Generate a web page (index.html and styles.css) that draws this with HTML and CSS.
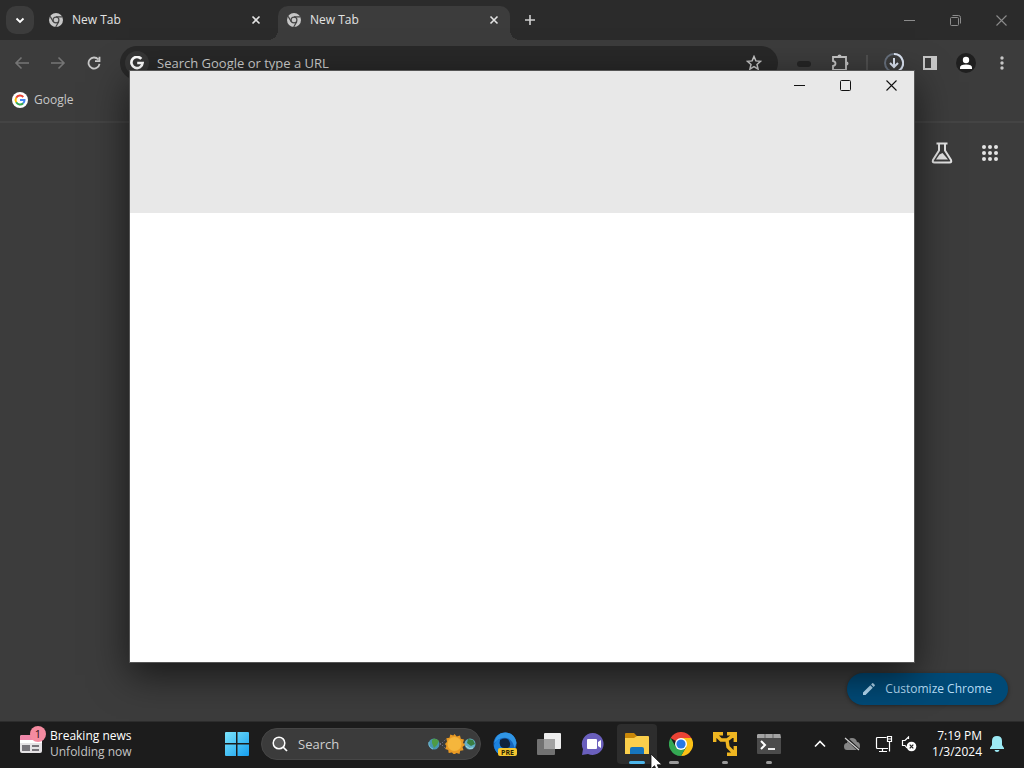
FILE: index.html
```
<!DOCTYPE html>
<html lang="en">

<head>
  <meta charset="UTF-8" />
  <title>New Tab</title>
  <meta name="viewport" content="width=device-width, initial-scale=1.0" />
  <link rel="stylesheet" href="styles.css">
</head>

<body>

  <!-- shared shapes -->
  <svg class="defs" aria-hidden="true">
    <symbol id="chrome-mono" viewBox="0 0 24 24">
      <circle cx="12" cy="12" r="12" fill="#c7c7c7" />
      <path d="M12 6.5h11M7.2 14.8L2 5.8M16.8 14.8L11.5 24" stroke="#444" stroke-width="2" />
      <circle cx="12" cy="12" r="6" fill="#444" />
      <circle cx="12" cy="12" r="4" fill="#c7c7c7" />
    </symbol>
    <symbol id="close" viewBox="0 0 10 10">
      <path d="M1.5 1.5l7 7M8.5 1.5l-7 7" stroke="currentColor" stroke-width="1.6" />
    </symbol>
    <symbol id="win-close" viewBox="0 0 11 11">
      <path d="M.5.5l10 10M10.5.5l-10 10" stroke="currentColor" stroke-width="1.1" />
    </symbol>
    <symbol id="win-min" viewBox="0 0 11 11">
      <path d="M0 5.5h11" stroke="currentColor" />
    </symbol>
  </svg>

  <div class="browser">
    <div class="tab-strip">
      <button class="tab-search" aria-label="Search tabs">
        <svg width="10" height="10" viewBox="0 0 10 10"><path d="M1.5 3.5L5 7l3.5-3.5" fill="none" stroke="#fff" stroke-width="1.8" /></svg>
      </button>
      <div class="tab">
        <svg width="14" height="14"><use href="#chrome-mono" /></svg>
        <span>New Tab</span>
        <button aria-label="Close tab"><svg width="10" height="10"><use href="#close" /></svg></button>
      </div>
      <div class="tab active">
        <svg width="14" height="14"><use href="#chrome-mono" /></svg>
        <span>New Tab</span>
        <button aria-label="Close tab"><svg width="10" height="10"><use href="#close" /></svg></button>
      </div>
      <button class="new-tab" aria-label="New tab">
        <svg width="12" height="12" viewBox="0 0 12 12"><path d="M6 1v10M1 6h10" stroke="#d0d0d0" stroke-width="1.6" /></svg>
      </button>
      <div class="win-controls">
        <button aria-label="Minimize"><svg width="11" height="11"><use href="#win-min" /></svg></button>
        <button aria-label="Restore">
          <svg width="11" height="11" viewBox="0 0 11 11"><rect x=".5" y="2.5" width="8" height="8" rx="1" fill="none" stroke="currentColor" /><path d="M2.5.5h6q2 0 2 2v6" fill="none" stroke="currentColor" /></svg>
        </button>
        <button aria-label="Close"><svg width="11" height="11"><use href="#win-close" /></svg></button>
      </div>
    </div>

    <div class="toolbar">
      <button class="dim" aria-label="Back">
        <svg width="16" height="14" viewBox="0 0 16 14"><path d="M15 7H2M7.5 1.5L2 7l5.500 5.500" fill="none" stroke="currentColor" stroke-width="1.6" /></svg>
      </button>
      <button class="dim" aria-label="Forward">
        <svg width="16" height="14" viewBox="0 0 16 14"><path d="M1 7h13M8.5 1.5L14 7l-5.500 5.500" fill="none" stroke="currentColor" stroke-width="1.6" /></svg>
      </button>
      <button aria-label="Reload">
        <svg width="14" height="14" viewBox="0 0 14 14"><path d="M11.3 3.5A5.500 5.500 0 1 0 12.5 7.8M12.5.8v4.400H8" fill="none" stroke="currentColor" stroke-width="1.8" /></svg>
      </button>
      <div class="omnibox">
        <span class="g-chip">
          <svg width="14" height="14" viewBox="0 0 14 14"><path d="M11.3 2.9A5.600 5.600 0 1 0 12.6 7H7.2" fill="none" stroke="#fff" stroke-width="2.6" /></svg>
        </span>
        <input type="text" aria-label="Address and search bar" placeholder="Search Google or type a URL" />
        <button aria-label="Bookmark this tab">
          <svg width="16" height="16" viewBox="0 0 16 16"><path d="M8 1.5l1.9 4.4 4.7.4-3.6 3.1 1.1 4.7L8 11.6l-4.100 2.5L5 9.400 1.400 6.3l4.700-.4z" fill="none" stroke="currentColor" stroke-width="1.5" /></svg>
        </button>
      </div>
      <button aria-label="Extension">
        <svg width="16" height="16" viewBox="0 0 16 16"><rect x="1" y="6" width="14" height="6" rx="3" fill="#252525" /></svg>
      </button>
      <button aria-label="Extensions">
        <svg width="18" height="18" viewBox="0 0 18 18"><path d="M2 3h13v13H2v-4q2.500-.5 2.500-2.500T2 7z" fill="none" stroke="currentColor" stroke-width="1.8" /><path d="M6.500 2.500a2 2 0 0 1 4 0zM15.500 7.500a2 2 0 0 1 0 4z" fill="currentColor" /></svg>
      </button>
      <span class="divider"></span>
      <button aria-label="Downloads">
        <svg width="20" height="20" viewBox="0 0 20 20"><circle cx="10" cy="10" r="9" fill="none" stroke="#68717e" stroke-width="2" /><path d="M10 1a9 9 0 0 1 5 16.5" fill="none" stroke="#dce4f2" stroke-width="2" /><path d="M10 5v9M6 10l4 4 4-4" fill="none" stroke="#dce4f2" stroke-width="2" /></svg>
      </button>
      <button aria-label="Side panel">
        <svg width="14" height="14" viewBox="0 0 14 14"><path d="M1 1h12v12H1z" fill="none" stroke="currentColor" stroke-width="2" /><path d="M8 1h5v12H8z" fill="currentColor" /></svg>
      </button>
      <button aria-label="Profile">
        <svg width="20" height="20" viewBox="0 0 20 20"><circle cx="10" cy="10" r="10" fill="#1f1f1f" /><circle cx="10" cy="7" r="3.2" fill="#fff" /><path d="M4 16v-1.5q0-3 6-3t6 3V16z" fill="#fff" /></svg>
      </button>
      <button aria-label="Menu">
        <svg width="4" height="14" viewBox="0 0 4 14" fill="currentColor"><circle cx="2" cy="2" r="1.7" /><circle cx="2" cy="7" r="1.7" /><circle cx="2" cy="12" r="1.7" /></svg>
      </button>
    </div>

    <div class="bookmarks">
      <a href="#">
        <svg width="16" height="16" viewBox="0 0 16 16">
          <circle cx="8" cy="8" r="8" fill="#fff" />
          <g fill="none" stroke-width="2">
            <path d="M4.2 5.7A4.500 4.500 0 0 1 11.3 5" stroke="#ea4335" />
            <path d="M4.2 10.3a4.500 4.500 0 0 1 0-4.6" stroke="#fbbc05" />
            <path d="M11.2 11.2a4.500 4.500 0 0 1-7-.9" stroke="#34a853" />
            <path d="M8 8h4.500q0 2-1.300 3.2" stroke="#4285f4" />
          </g>
        </svg>
        <span>Google</span>
      </a>
    </div>

    <div class="new-tab-page">
      <div class="shortcuts">
        <button aria-label="Search Labs">
          <svg width="22" height="22" viewBox="0 0 22 22"><path d="M5.500 1.500h11M8 2v6.500L2 18q-1 2.500 1.500 2.500h15Q21 20.500 20 18l-6-9.500V2" fill="none" stroke="currentColor" stroke-width="2" /><path d="M5 17.500l3.500-5 3-1.500 5.500 6.500z" fill="currentColor" /></svg>
        </button>
        <button aria-label="Google apps">
          <svg width="16" height="16" viewBox="0 0 16 16" fill="currentColor"><circle cx="2" cy="2" r="2" /><circle cx="8" cy="2" r="2" /><circle cx="14" cy="2" r="2" /><circle cx="2" cy="8" r="2" /><circle cx="8" cy="8" r="2" /><circle cx="14" cy="8" r="2" /><circle cx="2" cy="14" r="2" /><circle cx="8" cy="14" r="2" /><circle cx="14" cy="14" r="2" /></svg>
        </button>
      </div>
      <button class="customize">
        <svg width="12" height="12" viewBox="0 0 12 12" fill="currentColor"><path d="M0 9.500L7.300 2.200l2.500 2.500L2.500 12H0zM8.100 1.400L9.200.3q.5-.5 1 0l1.500 1.500q.5.5 0 1l-1.100 1.100z" /></svg>
        <span>Customize Chrome</span>
      </button>
    </div>

    <!-- window that is still loading -->
    <div class="window">
      <div class="window-head">
        <div class="win-controls">
          <button aria-label="Minimize"><svg width="11" height="11"><use href="#win-min" /></svg></button>
          <button aria-label="Maximize">
            <svg width="11" height="11" viewBox="0 0 11 11"><rect x=".5" y=".5" width="10" height="10" rx="1" fill="none" stroke="currentColor" /></svg>
          </button>
          <button aria-label="Close"><svg width="11" height="11"><use href="#win-close" /></svg></button>
        </div>
      </div>
    </div>
  </div>

  <div class="taskbar">
    <button class="news">
      <span class="news-icon">
        <svg width="22" height="18" viewBox="0 0 22 18"><rect width="22" height="18" rx="2" fill="#e5e3e5" /><path d="M2 0h18q2 0 2 2v3H0V2q0-2 2-2z" fill="#ee86a8" /><path d="M0 5h22v3H0z" fill="#fff" /><path d="M2 10h8v6H2zM12 10h7v2h-7zM12 14h7v2h-7z" fill="#77747a" /></svg>
        <span class="badge">1</span>
      </span>
      <span class="news-text">
        <span>Breaking news</span>
        <span class="sub">Unfolding now</span>
      </span>
    </button>

    <div class="apps">
      <button class="app" aria-label="Start">
        <svg width="24" height="24" viewBox="0 0 24 24">
          <defs><linearGradient id="start" x2="1" y2="1"><stop stop-color="#7be4fb" /><stop offset="1" stop-color="#159ef0" /></linearGradient></defs>
          <path d="M1 0h10v11H0V1q0-1 1-1zM12.500 0H23q1 0 1 1v10H12.500zM0 12.500h11V24H1q-1 0-1-1zM12.500 12.500H24V23q0 1-1 1H12.500z" fill="url(#start)" />
        </svg>
      </button>
      <div class="search">
        <svg width="16" height="16" viewBox="0 0 16 16"><circle cx="7" cy="7" r="5.8" fill="#5b5b5b" stroke="#fff" stroke-width="1.5" /><path d="M11 11l4 4" stroke="#fff" stroke-width="1.7" /></svg>
        <input type="text" aria-label="Search" placeholder="Search" />
        <svg width="48" height="20" viewBox="0 0 48 20">
          <path d="M8 5l10 10M8 15L18 5M32 6l8 8M32 14l8-8" stroke="#8a8aa5" stroke-dasharray="1 2" />
          <circle cx="6" cy="10" r="5.500" fill="#4795b0" /><path d="M4 6q3-3 7 1l-2 4-3 3-2-5z" fill="#4e9b45" /><path d="M1 8q-1 5 4 7" fill="none" stroke="#79bed8" />
          <circle cx="42" cy="10" r="5.500" fill="#63afc5" /><path d="M40 5l5 1 2 4-4 2-4-3z" fill="#397e43" /><path d="M38 12q3 4 7 2" fill="none" stroke="#b0dce5" />
          <path d="M26.500 0l2.300 2.500 3.200-1 .8 3.200 3.200.8-1 3.200 2 2.300-2.500 2 1 3.200-3.300.5-.7 3.200-3-1-2.500 1.800-2-2.300-3.300.7-.5-3.200-3-1 1.200-3L17 10l2-2.300-.7-3.400 3.200-.5.8-3.200 3 1z" fill="#e99a24" /><circle cx="26.500" cy="10" r="7" fill="#f5b63c" />
        </svg>
      </div>
      <button class="app" aria-label="Edge Canary">
        <svg width="26" height="26" viewBox="0 0 26 26">
          <circle cx="13" cy="13" r="11.500" fill="#1565bd" /><path d="M2 12Q4 1 14 1.500q9 1 10.500 10.500l-2 5q-2-9-8-10T2 12z" fill="#3096e6" /><path d="M8 9q8-4 10 3 1 6-6 5T8 9z" fill="#10233d" /><path d="M2 15q2-7 6-7-2 8 5 11l-4 5q-6-2-7-9z" fill="#1c82dd" />
          <rect x="6" y="17" width="19" height="8" rx="2" fill="#f4c630" /><text class="pre" x="15.500" y="23.500" text-anchor="middle">PRE</text>
        </svg>
      </button>
      <button class="app" aria-label="Task view">
        <svg width="24" height="24" viewBox="0 0 24 24"><rect x="7" y="1" width="17" height="16" rx="1" fill="#ededed" /><rect y="7" width="18" height="16" rx="1" fill="#727272" /><path d="M7 7h11v10H7z" fill="#a2a2a2" /></svg>
      </button>
      <button class="app" aria-label="Chat">
        <svg width="24" height="24" viewBox="0 0 24 24"><path d="M12 1a11 11 0 1 1-5 21L1 23l1-6A11 11 0 0 1 12 1z" fill="#6a5fbd" /><rect x="6" y="7" width="10" height="10" rx="1" fill="#fff" /><path d="M17 10l3-2v8l-3-2z" fill="#fff" /></svg>
      </button>
      <button class="app current" aria-label="File Explorer">
        <svg width="24" height="24" viewBox="0 0 24 24"><path d="M1 1h8l3 3h11v6H0V2q0-1 1-1z" fill="#c98708" /><path d="M0 6h9l3-2h11q1 0 1 1v17H0z" fill="#fbcf4b" /><path d="M5 22v-5q0-2 2-2h10q2 0 2 2v5z" fill="#1675bd" /></svg>
      </button>
      <button class="app running wide" aria-label="Google Chrome">
        <svg width="24" height="24" viewBox="0 0 24 24"><path d="M12 12L1.600 6A12 12 0 0 1 22.400 6z" fill="#ea4335" /><path d="M12 6h10.400A12 12 0 0 1 12 24l5.200-9z" fill="#fbc116" /><path d="M1.600 6L6.800 15l5.200 3 5.200-3L12 24A12 12 0 0 1 1.600 6z" fill="#34a853" /><circle cx="12" cy="12" r="6" fill="#fff" /><circle cx="12" cy="12" r="4.600" fill="#2878e4" /></svg>
      </button>
      <button class="app running" aria-label="Network tool">
        <svg width="24" height="24" viewBox="0 0 24 24" fill="none" stroke="#efb621" stroke-width="3.400"><path d="M1.700 10V1.700H10M14 1.700h8.300V10M22.300 14v8.300H14M2 2l6 6h6l8-6M14 8l1 7 7 7" /></svg>
      </button>
      <button class="app running" aria-label="Terminal">
        <svg width="24" height="20" viewBox="0 0 24 20"><rect width="24" height="20" rx="1" fill="#4b4b4b" /><path d="M1 0h22l1 4H0V1z" fill="#a4a4a4" /><path d="M8 0v4M16 0v4" stroke="#666" /><path d="M4 7l4 4-4 4" fill="none" stroke="#fff" stroke-width="2" /><path d="M11 15h7" stroke="#fff" stroke-width="1.8" /></svg>
      </button>
    </div>

    <div class="tray">
      <button aria-label="Show hidden icons">
        <svg width="12" height="8" viewBox="0 0 12 8"><path d="M1 6.500l5-5 5 5" fill="none" stroke="#fff" stroke-width="1.6" /></svg>
      </button>
      <button aria-label="OneDrive">
        <svg width="18" height="14" viewBox="0 0 18 14"><path d="M4 13q-3 0-3-3.500t3-3.500q1-5 5-5t5 4q3 0 3 4t-3 4z" fill="#858585" /><path d="M3 1l13 12" stroke="#1c1c1c" stroke-width="3" /><path d="M2 1l14 12" stroke="#d4d4d4" stroke-width="1.2" /></svg>
      </button>
      <button class="network" aria-label="Network">
        <svg width="18" height="18" viewBox="0 0 18 18" fill="none" stroke="#fff" stroke-width="1.2"><path d="M11.500 2.500h-9q-1 0-1 1v9q0 1 1 1H13M7.500 13.500v3M4 16.500h8M12.500 1.500h4v5h-4zM12.500 4h4M14.500 6.500v10" /></svg>
      </button>
      <button class="sound" aria-label="Volume">
        <svg width="16" height="16" viewBox="0 0 16 16"><path d="M7.500 3V1L4 4.500H1.500v5H4L6 12" fill="none" stroke="#fff" stroke-width="1.2" /><circle cx="10.500" cy="10.500" r="4.800" fill="#fff" /><path d="M8.700 8.700l3.600 3.600M12.300 8.700l-3.600 3.600" stroke="#222" stroke-width="1.2" /></svg>
      </button>
      <button class="clock"><span>7:19 PM</span><span>1/3/2024</span></button>
      <button aria-label="Notifications">
        <svg width="14" height="16" viewBox="0 0 14 16" fill="#9deaf5"><path d="M7 0q5 0 5 5v4l2 3v1H0v-1l2-3V5q0-5 5-5zM4.500 14h5q-.5 2-2.500 2t-2.500-2z" /></svg>
      </button>
    </div>
  </div>

  <svg class="cursor" width="13" height="20" viewBox="0 0 13 20"><path d="M1 1v15l3.500-3.300L7 18.500l2.700-1.200-2.500-5.500H12z" fill="#fff" stroke="#111" stroke-width=".8" /></svg>

</body>

</html>
```

FILE: styles.css
```
* {
  margin: 0;
  padding: 0;
  box-sizing: border-box;
  font-family: "Open Sans", "Noto Sans", sans-serif;
}

body {
  height: 100vh;
  display: flex;
  flex-direction: column;
  overflow: hidden;
  background: #1c1c1c;
  color: #e3e3e3;
  font-size: 12px;
  line-height: 16px;
}

button {
  display: flex;
  align-items: center;
  justify-content: center;
  border: none;
  background: none;
  color: inherit;
  font-size: inherit;
  line-height: inherit;
}

input {
  flex: 1;
  min-width: 0;
  border: none;
  outline: none;
  background: none;
  color: inherit;
}

svg {
  flex: none;
  display: block;
}

.defs {
  position: absolute;
  width: 0;
  height: 0;
}

/* browser */

.browser {
  flex: 1;
  position: relative;
  display: flex;
  flex-direction: column;
  overflow: hidden;
  background: #3c3c3c;
}

.tab-strip {
  height: 40px;
  display: flex;
  align-items: center;
  padding-left: 6px;
  background: #2b2b2b;
}

.tab-search {
  width: 28px;
  height: 28px;
  border-radius: 10px;
  background: #3c3c3c;
}

.tab {
  flex: 0 1 232px;
  height: 28px;
  display: flex;
  align-items: center;
  gap: 9px;
  margin-left: 6px;
  padding: 0 8px 0 9px;
}

.tab span {
  flex: 1;
}

.tab button {
  width: 16px;
  height: 16px;
}

.tab.active {
  position: relative;
  align-self: flex-end;
  height: 34px;
  padding-bottom: 6px;
  border-radius: 10px 10px 0 0;
  background: #3c3c3c;
}

.tab.active::before,
.tab.active::after {
  content: "";
  position: absolute;
  bottom: 0;
  width: 10px;
  height: 10px;
}

.tab.active::before {
  right: 100%;
  background: radial-gradient(circle at 0 0, transparent 10px, #3c3c3c 10px);
}

.tab.active::after {
  left: 100%;
  background: radial-gradient(circle at 100% 0, transparent 10px, #3c3c3c 10px);
}

.new-tab {
  width: 28px;
  height: 28px;
  margin-left: 6px;
}

.win-controls {
  display: flex;
  margin-left: auto;
}

.win-controls button {
  width: 46px;
  height: 28px;
}

.tab-strip .win-controls {
  color: #8c8c8c;
}

.toolbar {
  height: 46px;
  display: flex;
  align-items: center;
  padding: 0 4px;
  color: #c7c7c7;
}

.toolbar > button {
  width: 36px;
  height: 34px;
}

.toolbar .dim {
  color: #757575;
}

.omnibox {
  flex: 1;
  height: 34px;
  display: flex;
  align-items: center;
  gap: 8px;
  margin: 0 8px;
  padding: 0 16px 0 5px;
  border-radius: 17px;
  background: #282828;
}

.omnibox input {
  font-size: 13px;
}

.omnibox input::placeholder {
  color: #d0d0d0;
}

.g-chip {
  width: 24px;
  height: 24px;
  display: flex;
  align-items: center;
  justify-content: center;
  border-radius: 50%;
  background: #363636;
}

.divider {
  width: 2px;
  height: 16px;
  margin: 0 8px;
  background: #505050;
}

.bookmarks {
  height: 37px;
  padding: 6px 12px;
  border-bottom: 2px solid #444;
  color: #c7c7c7;
}

.bookmarks a {
  display: inline-flex;
  align-items: center;
  gap: 6px;
  color: inherit;
  text-decoration: none;
}

.new-tab-page {
  flex: 1;
  display: flex;
  flex-direction: column;
  align-items: flex-end;
  justify-content: space-between;
  padding: 12px 16px 16px;
}

.shortcuts {
  display: flex;
  gap: 12px;
  color: #e3e3e3;
}

.shortcuts button {
  width: 36px;
  height: 36px;
}

.customize {
  height: 32px;
  gap: 10px;
  padding: 0 16px;
  border-radius: 16px;
  background: #004a77;
  box-shadow: 0 1px 4px rgba(0, 0, 0, 0.4);
  color: #b5dcf5;
}

/* floating window */

.window {
  position: absolute;
  top: 70px;
  right: 109px;
  bottom: 58px;
  left: 129px;
  border: 1px solid #555;
  background: #fff;
  box-shadow: 0 12px 36px rgba(0, 0, 0, 0.6);
}

.window-head {
  height: 142px;
  display: flex;
  align-items: flex-start;
  background: #e8e8e8;
  color: #111;
}

/* taskbar */

.taskbar {
  height: 47px;
  display: flex;
  align-items: center;
  padding-bottom: 2px;
  border-top: 1px solid #2c2c2c;
}

.news {
  flex: none;
  width: 217px;
  justify-content: flex-start;
  gap: 8px;
  padding-left: 20px;
  text-align: left;
}

.news-icon {
  position: relative;
}

.badge {
  position: absolute;
  top: -9px;
  right: -4px;
  width: 16px;
  height: 16px;
  border-radius: 50%;
  background: #f58ba0;
  color: #2b1015;
  font-size: 11px;
  text-align: center;
}

.news-text,
.clock {
  display: flex;
  flex-direction: column;
}

.news-text {
  color: #fff;
}

.news-text .sub {
  color: #c4c4c4;
}

.apps {
  flex: 1;
  min-width: 0;
  display: flex;
  align-items: center;
  gap: 4px;
}

.app {
  flex: none;
  position: relative;
  width: 40px;
  height: 40px;
  border-radius: 4px;
}

.app.current {
  background: #2d2d2d;
}

.app.current::after,
.app.running::after {
  content: "";
  position: absolute;
  bottom: 0;
  left: calc(50% - 3px);
  width: 6px;
  height: 3px;
  border-radius: 2px;
  background: #9a9a9a;
}

.app.current::after {
  left: calc(50% - 8px);
  width: 16px;
  background: #4cb5ea;
}

.app.wide::after {
  left: 8px;
  width: 10px;
}

.pre {
  fill: #2b2505;
  font-size: 7px;
  font-weight: bold;
}

.search {
  width: 220px;
  min-width: 0;
  height: 32px;
  display: flex;
  align-items: center;
  gap: 10px;
  padding: 0 4px 0 10px;
  border: 1px solid #464646;
  border-radius: 16px;
  background: #3b3b3b;
}

.search input {
  font-size: 13px;
}

.search input::placeholder {
  color: #cfcfcf;
}

.tray {
  flex: none;
  display: flex;
  align-items: center;
  padding-right: 20px;
  color: #fff;
}

.tray button {
  height: 40px;
}

.tray button:nth-child(-n + 2) {
  width: 32px;
}

.tray .network {
  width: 32px;
}

.tray .sound {
  width: 18px;
}

.tray .clock {
  align-items: flex-end;
  margin: 0 8px 0 14px;
}

.cursor {
  position: absolute;
  top: 753px;
  left: 650px;
}
```
